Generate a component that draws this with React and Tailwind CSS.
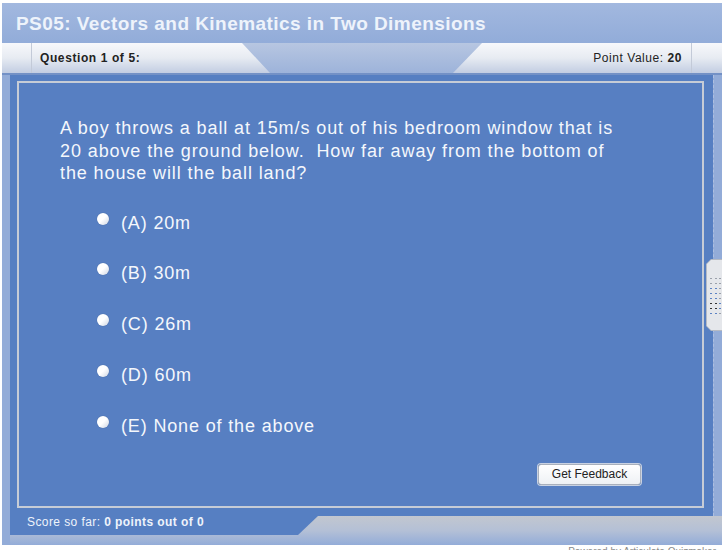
const OPTIONS = ['(A) 20m', '(B) 30m', '(C) 26m', '(D) 60m', '(E) None of the above']

const DOTS = [
  'g', 'g', 'g',
  'g', 'g', 'g',
  'b', 'b', 'g',
  'b', 'b', 'g',
  'b', 'b', 'g',
  'k', 'k', 'b',
  'k', 'k', 'b',
  'b', 'b', 'g',
]

export default function App() {
  return (
    <div className="relative w-[724px] h-[550px] overflow-hidden bg-white font-['Liberation_Sans',Arial,sans-serif]">
      <div className="ml-[2px] mt-[3px] w-[720px] flex flex-col bg-[#93acd8]">
        {/* Title bar */}
        <div className="h-[40px] flex items-center pl-[14px] pt-[3px] bg-gradient-to-b from-[#a2b8df] to-[#92acd9]">
          <h1 className="text-[19px] font-bold text-[#eef3fb] tracking-[0.45px]">
            PS05: Vectors and Kinematics in Two Dimensions
          </h1>
        </div>

        {/* Question bar */}
        <div className="h-[30px] flex bg-gradient-to-b from-[#b7c6e1] to-[#9db3da]">
          <div className="w-[268px] h-full flex items-center bg-gradient-to-b from-[#f7f8fb] via-[#e7ebf2] to-[#c2cde2] [clip-path:polygon(0_0,240px_0,100%_100%,0_100%)]">
            <div className="w-[30px] h-full border-r border-[#c3cad8]" />
            <span className="pl-[8px] text-[12px] font-bold text-[#222] tracking-[0.6px]">Question 1 of 5:</span>
          </div>
          <div className="flex-1" />
          <div className="w-[269px] h-full flex items-center justify-end bg-gradient-to-b from-[#f7f8fb] via-[#e7ebf2] to-[#c2cde2] [clip-path:polygon(29px_0,100%_0,100%_100%,0_100%)]">
            <span className="pr-[9px] text-[12px] text-[#222] tracking-[0.55px]">
              Point Value: <b>20</b>
            </span>
            <div className="w-[31px] h-full border-l border-[#c3cad8]" />
          </div>
        </div>
        <div className="h-[2px] bg-[#7391c6]" />

        {/* Main area */}
        <div className="h-[441px] flex">
          <div className="w-[8px] bg-[#93acd8]" />
          <div className="w-[703px] pt-[6px] pl-[7px] pr-[9px] pb-[8px] bg-[#567fc2]">
            <div className="h-full border-2 border-[#c6ccd6] bg-[#577fc2] flex flex-col">
              <p className="pl-[41px] pt-[34px] text-[18px] leading-[22.5px] tracking-[0.9px] text-[#f4f7fc]">
                A boy throws a ball at 15m/s out of his bedroom window that is
                <br />
                20 above the ground below.{'\u00a0'} How far away from the bottom of
                <br />
                the house will the ball land?
              </p>
              <div className="mt-[27px] pl-[78px] flex flex-col gap-[28.75px]">
                {OPTIONS.map((opt) => (
                  <div key={opt} className="h-[22px] flex items-start">
                    <span className="mt-[1px] w-[12px] h-[12px] rounded-full bg-gradient-to-br from-white via-white to-[#cfd6e2] shadow-[0_0_1px_rgba(0,0,0,0.3)]" />
                    <span className="ml-[12px] text-[18px] leading-[22px] tracking-[0.85px] text-[#f4f7fc]">{opt}</span>
                  </div>
                ))}
              </div>
              <div className="mt-[27px] flex justify-end pr-[61px]">
                <button className="w-[103px] h-[21px] rounded-[3px] border border-[#a9b0bc] bg-gradient-to-b from-white to-[#eef1f5] text-[12px] text-[#222] shadow-[0_0_0_1px_#c9d2e2]">
                  Get Feedback
                </button>
              </div>
            </div>
          </div>
          <div className="w-[9px] bg-[#93acd8] border-l border-dashed border-[#aebfe0]" />
        </div>

        {/* Score bar */}
        <div className="h-[29px] flex bg-gradient-to-b from-[#c2c7cf] via-[#b4c0d6] to-[#93acd8]">
          <div className="w-[8px] bg-[#93acd8]" />
          <div className="w-[308px] h-[19px] bg-[#567fc2] [clip-path:polygon(0_0,100%_0,288px_100%,0_100%)]">
            <p className="pl-[17px] text-[12px] leading-[12px] tracking-[0.42px] text-[#eef3fb]">
              Score so far: <b>0 points out of 0</b>
            </p>
          </div>
        </div>
      </div>

      <p className="mt-[1px] pr-[8px] text-right text-[10px] leading-[12px] text-[#8a8a8a]">
        Powered by Articulate Quizmaker
      </p>

      {/* Side grip */}
      <div className="absolute left-[706px] top-[259px] w-[16px] h-[72px] bg-[#b5bac3] [clip-path:polygon(5px_0,100%_0,100%_100%,5px_100%,0_calc(100%-5px),0_5px)]">
        <div className="absolute inset-[1px] right-0 bg-[#e5e7eb] [clip-path:polygon(4px_0,100%_0,100%_100%,4px_100%,0_calc(100%-4px),0_4px)] pt-[18px] pl-[3px]">
          <div className="grid grid-cols-3 gap-x-[3px] gap-y-[4px] w-[11px]">
            {DOTS.map((c, i) => (
              <span
                key={i}
                className={`w-[2px] h-[1px] ${c === 'b' ? 'bg-[#5b82c4]' : c === 'k' ? 'bg-[#333]' : 'bg-[#9aa0aa]'}`}
              />
            ))}
          </div>
        </div>
      </div>
    </div>
  )
}
